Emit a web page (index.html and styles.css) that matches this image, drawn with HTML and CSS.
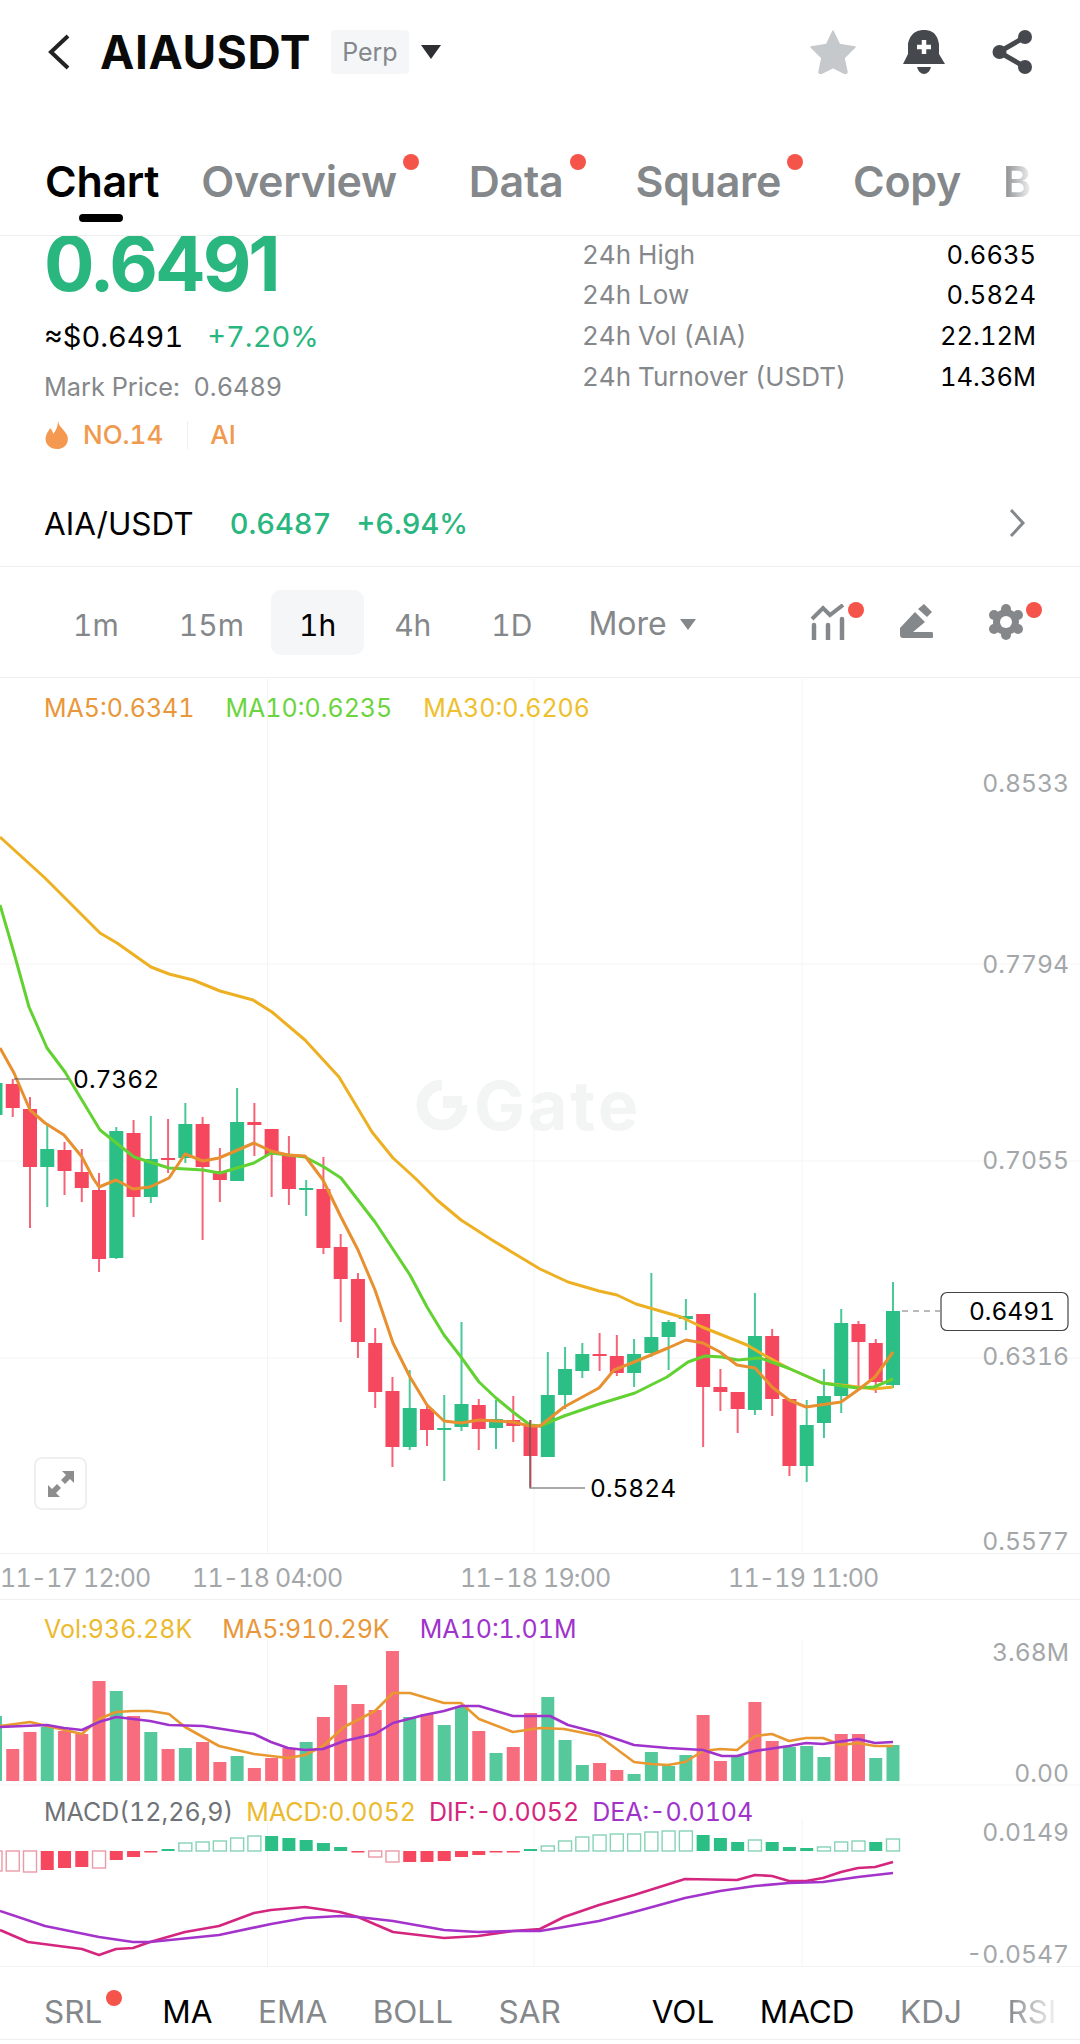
FILE: index.html
```html
<!DOCTYPE html>
<html>
    <head>
        <meta charset="UTF-8">
        <meta name="viewport" content="width=device-width, initial-scale=1.0">
        <title>AIAUSDT</title>
        <link rel="stylesheet" href="styles.css">
    </head>
    <body>
        <header class="top-bar">
            <svg class="back" width="24" height="36" viewBox="0 0 24 36"><path d="M21 2 L4 18 L21 34" fill="none" stroke="#222" stroke-width="4"/></svg>
            <span class="symbol">AIAUSDT</span>
            <span class="perp">Perp</span>
            <span class="caret-down"></span>
            <span class="top-icons">
                <svg width="46" height="44" viewBox="0 0 46 44"><path d="M23 1 L29.5 14.5 L45 17 L34 28 L37 42 Q37 44 34 43 L23 37.5 L12 43 Q9 44 9 42 L12 28 L1 17 L16.5 14.5 Z" fill="#c5c9cb" stroke="#c5c9cb" stroke-linejoin="round" stroke-width="1.5"/></svg>
                <svg width="42" height="44" viewBox="0 0 42 44"><path d="M21 0 C9 0 6 9 5 14 L5 24 L0 34 L42 34 L36 24 L36 14 C35 9 33 0 21 0 Z" fill="#45484c"/><path d="M14 37 H28 Q26 44 21 44 Q16 44 14 37 Z" fill="#45484c"/><path d="M21 10 V24 M14 17 H28" stroke="#fff" stroke-width="4.5"/></svg>
                <svg width="42" height="44" viewBox="0 0 42 44"><path d="M33 7 L7 22 L33 37" fill="none" stroke="#45484c" stroke-width="5"/><circle cx="33" cy="7" r="7" fill="#45484c"/><circle cx="7.5" cy="22" r="7" fill="#45484c"/><circle cx="33" cy="37" r="7" fill="#45484c"/></svg>
            </span>
        </header>

        <nav class="tabs">
            <span class="tab active">Chart</span>
            <span class="tab dotted">Overview</span>
            <span class="tab dotted">Data</span>
            <span class="tab dotted">Square</span>
            <span class="tab">Copy</span>
            <span class="tab fade">B</span>
        </nav>

        <section class="ticker">
            <div class="ticker-left">
                <div class="price">0.6491</div>
                <div class="price-sub"><span class="approx">≈$0.6491</span><span class="up">+7.20%</span></div>
                <div class="mark">Mark Price:&nbsp; 0.6489</div>
                <div class="rank">
                    <svg width="24" height="28" viewBox="0 0 24 28"><path d="M13 0 C14 6 19 8 22 14 C25 21 20 28 12 28 C4 28 -1 22 1 15 C2 11 4 10 5 7 C7 9 8 11 8 13 C11 10 13 5 13 0 Z" fill="#f4994f"/></svg>
                    <span>NO.14</span><i class="rank-sep"></i><span>AI</span>
                </div>
            </div>
            <dl class="stats">
                <div class="stat"><dt>24h High</dt><dd>0.6635</dd></div>
                <div class="stat"><dt>24h Low</dt><dd>0.5824</dd></div>
                <div class="stat"><dt>24h Vol (AIA)</dt><dd>22.12M</dd></div>
                <div class="stat"><dt>24h Turnover (USDT)</dt><dd>14.36M</dd></div>
            </dl>
        </section>

        <div class="pair-row">
            <span class="pair">AIA/USDT</span>
            <span class="pair-price">0.6487</span>
            <span class="pair-price">+6.94%</span>
            <svg class="pair-more" width="18" height="30" viewBox="0 0 18 30"><path d="M3 2 L15 15 L3 28" fill="none" stroke="#85888b" stroke-width="3"/></svg>
        </div>

        <div class="intervals">
            <span class="interval">1m</span>
            <span class="interval before-selected">15m</span>
            <span class="interval selected">1h</span>
            <span class="interval">4h</span>
            <span class="interval">1D</span>
            <span class="interval more">More<i class="caret-small"></i></span>
            <span class="tools">
                <span class="tool badge">
                    <svg width="36" height="36" viewBox="0 0 36 36"><path d="M2 15 L13 4 L20 11 L33 1" fill="none" stroke="#85888b" stroke-width="4"/><path d="M4 21 V35 M18 21 V35 M32 15 V35" stroke="#85888b" stroke-width="4.5" stroke-linecap="round"/></svg>
                </span>
                <span class="tool">
                    <svg width="36" height="36" viewBox="0 0 36 36"><path d="M1 24 L16 8 L26 18 L14 28 H33 Q34 28 34 30 V33 Q34 34 33 34 H4 Q1 34 1 31 Z" fill="#85888b"/><path d="M19 5 L25 0 L33 8 L28 13 Z" fill="#85888b"/></svg>
                </span>
                <span class="tool badge">
                    <svg width="36" height="36" viewBox="0 0 36 36"><g fill="#85888b"><circle cx="18" cy="18" r="13"/><circle cx="18" cy="5" r="5"/><circle cx="18" cy="31" r="5"/><circle cx="6" cy="11" r="5"/><circle cx="30" cy="11" r="5"/><circle cx="6" cy="25" r="5"/><circle cx="30" cy="25" r="5"/></g><circle cx="18" cy="18" r="6" fill="#fff"/></svg>
                </span>
            </span>
        </div>

        <section class="panel panel-main">
            <svg id="mainChart" class="plot" width="1080" height="875" viewBox="0 678 1080 875"></svg>
            <div class="legend legend-main">
                <span class="c-ma5">MA5:0.6341</span>
                <span class="c-ma10">MA10:0.6235</span>
                <span class="c-ma30">MA30:0.6206</span>
            </div>
            <button class="expand">
                <svg width="30" height="30" viewBox="0 0 30 30"><path d="M28 2 V14 L24 10 L19 15 L15 11 L20 6 L16 2 Z M2 28 V16 L6 20 L11 15 L15 19 L10 24 L14 28 Z" fill="#8d8d8d"/></svg>
            </button>
        </section>

        <div class="time-axis">
            <span>11-17 12:00</span>
            <span>11-18 04:00</span>
            <span>11-18 19:00</span>
            <span>11-19 11:00</span>
        </div>

        <section class="panel panel-vol">
            <svg id="volChart" class="plot" width="1080" height="186" viewBox="0 1601 1080 186"></svg>
            <div class="legend legend-vol">
                <span class="c-vol">Vol:936.28K</span>
                <span class="c-ma5">MA5:910.29K</span>
                <span class="c-purple">MA10:1.01M</span>
            </div>
        </section>

        <section class="panel panel-macd">
            <svg id="macdChart" class="plot" width="1080" height="181" viewBox="0 1787 1080 181"></svg>
            <div class="legend legend-macd">
                <span class="c-gray">MACD(12,26,9)</span>
                <span class="c-vol">MACD:0.0052</span>
                <span class="c-dif">DIF:-0.0052</span>
                <span class="c-purple">DEA:-0.0104</span>
            </div>
        </section>

        <nav class="indicators">
            <span class="ind dotted-ind">SRL</span>
            <span class="ind on">MA</span>
            <span class="ind">EMA</span>
            <span class="ind">BOLL</span>
            <span class="ind">SAR</span>
            <i class="ind-sep"></i>
            <span class="ind on">VOL</span>
            <span class="ind on">MACD</span>
            <span class="ind">KDJ</span>
            <span class="ind fade">RSI</span>
        </nav>

        <script src="chart.js"></script>
    </body>
</html>
```

FILE: styles.css
```css
* {
    box-sizing: border-box;
}
body {
    margin: 0;
    width: 1080px;
    background: #fff;
    font-family: Inter, "Liberation Sans", sans-serif;
    font-variant-numeric: tabular-nums;
    color: #000;
    overflow-x: hidden;
}

.top-bar {
    height: 104px;
    display: flex;
    align-items: center;
    padding: 0 46px 0 47px;
}
.back {
    margin-right: 29px;
}
.symbol {
    font-size: 46px;
    font-weight: 700;
    letter-spacing: 0.6px;
    color: #0a0a0a;
}
.perp {
    margin-left: 20px;
    padding: 0 11px;
    line-height: 44px;
    font-size: 25px;
    color: #84888c;
    background: #f4f6f7;
    border-radius: 4px;
}
.caret-down {
    margin-left: 12px;
    border-left: 10px solid transparent;
    border-right: 10px solid transparent;
    border-top: 14px solid #2d2f33;
}
.top-icons {
    margin-left: auto;
    display: flex;
    gap: 47px;
    align-items: center;
}

.tabs {
    height: 132px;
    display: flex;
    align-items: center;
    gap: 42px;
    padding: 22px 0 0 45px;
    border-bottom: 1px solid #eeeeee;
    overflow: hidden;
    position: relative;
}
.tab {
    font-size: 43px;
    font-weight: 600;
    color: #85888b;
    position: relative;
    letter-spacing: -0.3px;
}
.tab.active {
    color: #000;
}
.tab.active::after {
    content: "";
    position: absolute;
    left: 34px;
    top: 59px;
    width: 44px;
    height: 8px;
    border-radius: 4px;
    background: #000;
}
.tab.dotted {
    margin-right: 30px;
}
.tab.dotted::after {
    content: "";
    position: absolute;
    right: -22px;
    top: -1px;
    width: 16px;
    height: 16px;
    border-radius: 50%;
    background: #f5544a;
}
.fade {
    background: linear-gradient(90deg, #85888b 0%, #f2f2f2 100%);
    -webkit-background-clip: text;
    background-clip: text;
    color: transparent;
}
.tab.fade {
    color: transparent;
}

.ticker {
    height: 234px;
    display: flex;
    padding-left: 44px;
}
.ticker-left {
    width: 538px;
}
.price {
    margin-top: -14px;
    font-size: 75px;
    font-weight: 700;
    line-height: 84px;
    letter-spacing: -3px;
    font-variant-numeric: normal;
    color: #2ab67f;
}
.price-sub {
    margin-top: 13px;
    display: flex;
    gap: 24px;
    font-size: 29px;
    line-height: 36px;
}
.up {
    color: #2ab67f;
}
.mark {
    margin-top: 16px;
    font-size: 25.3px;
    line-height: 32px;
    color: #85888b;
}
.rank {
    margin-top: 16px;
    display: flex;
    align-items: center;
    font-size: 26px;
    font-weight: 500;
    color: #f09a4f;
}
.rank svg {
    margin-right: 14px;
    margin-left: 1px;
}
.rank-sep {
    width: 1px;
    height: 28px;
    margin: 0 22px 0 24px;
    background: #f0f0f0;
}
.stats {
    flex: 1;
    margin: -2px 44px 0 0;
}
.stat {
    display: flex;
    justify-content: space-between;
    height: 40.6px;
    align-items: center;
    font-size: 26px;
}
.stat dt {
    color: #85888b;
}
.stat dd {
    margin: 0;
    font-size: 25.5px;
}

.pair-row {
    height: 97px;
    display: flex;
    align-items: center;
    padding: 10px 54px 0 44px;
    border-bottom: 1px solid #eeeeee;
    font-size: 29px;
}
.pair-price {
    margin-left: 25px;
    color: #2ab67f;
    font-weight: 500;
}
.pair {
    font-size: 31.5px;
    margin-right: 11px;
}
.pair-more {
    margin-left: auto;
}

.intervals {
    height: 111px;
    display: flex;
    align-items: center;
    padding: 0 0 0 43px;
    border-bottom: 1px solid #eeeeee;
}
.interval {
    padding: 3px 30px 0;
    height: 65px;
    line-height: 65px;
    font-size: 30px;
    color: #85888b;
    border-radius: 10px;
}
.interval.before-selected {
    margin-right: -3px;
}
.interval.selected {
    padding: 3px 28px 0;
    background: #f5f6f7;
    color: #000;
}
.interval.more {
    margin-left: -4px;
    font-size: 32px;
    display: flex;
    align-items: center;
}
.caret-small {
    margin-left: 13px;
    margin-top: 2px;
    border-left: 8.5px solid transparent;
    border-right: 8.5px solid transparent;
    border-top: 11px solid #85888b;
}
.tools {
    margin-left: auto;
    margin-right: 56px;
    display: flex;
    gap: 53px;
}
.tool {
    position: relative;
    display: block;
    height: 36px;
}
.tool.badge::after {
    content: "";
    position: absolute;
    right: -18px;
    top: -2px;
    width: 16px;
    height: 16px;
    border-radius: 50%;
    background: #f5544a;
}

.panel {
    position: relative;
}
.plot {
    position: absolute;
    left: 0;
    top: 0;
    display: block;
    overflow: visible;
}
.panel-main {
    height: 875px;
}
.panel-vol {
    height: 186px;
}
.panel-macd {
    height: 181px;
    border-bottom: 1px solid #f4f4f4;
}
.legend {
    position: relative;
    display: flex;
    font-size: 25px;
    line-height: 32px;
    padding-left: 44px;
}
.legend-main {
    gap: 31px;
    padding-top: 14px;
}
.legend-vol {
    gap: 30px;
    padding-top: 13px;
}
.legend-macd {
    gap: 13px;
    padding-top: 10px;
}
.c-ma5 {
    color: #e8973a;
}
.c-ma10 {
    color: #6cd43e;
}
.c-ma30 {
    color: #eec02d;
}
.c-vol {
    color: #ebba2e;
}
.c-purple {
    color: #a033cc;
}
.c-gray {
    color: #6f7276;
}
.c-dif {
    color: #d4267f;
}
.tick {
    font-size: 24.7px;
    fill: #a4a7a9;
    text-anchor: end;
}
.note {
    font-size: 24.5px;
    fill: #000;
}
.note.end {
    text-anchor: end;
}
.mark-text {
    font-size: 68px;
    font-weight: 700;
    letter-spacing: 3px;
    fill: #f3f5f5;
    font-variant-numeric: normal;
}
.expand {
    position: absolute;
    left: 34px;
    top: 779px;
    width: 53px;
    height: 53px;
    padding: 10px;
    border: 2px solid #efefef;
    border-radius: 8px;
    background: #fff;
}
.expand svg {
    display: block;
}

.time-axis {
    height: 47px;
    display: flex;
    align-items: center;
    padding-top: 3px;
    font-size: 25px;
    letter-spacing: -0.8px;
    color: #a4a7a9;
    border-top: 1px solid #f0f0f0;
    border-bottom: 1px solid #f0f0f0;
    white-space: nowrap;
}
.time-axis span {
    width: 148px;
    margin-right: 120px;
}
.time-axis span:first-child {
    margin-right: 44px;
}

.indicators {
    height: 73px;
    display: flex;
    align-items: center;
    padding: 17px 0 0 44px;
    border-bottom: 1px solid #eeeeee;
    font-size: 31.5px;
    color: #85888b;
    overflow: hidden;
}
.ind {
    margin-right: 45.5px;
}
.ind.on {
    color: #000;
}
.dotted-ind {
    position: relative;
    margin-right: 60px;
}
.dotted-ind::after {
    content: "";
    position: absolute;
    right: -20px;
    top: -2px;
    width: 16px;
    height: 16px;
    border-radius: 50%;
    background: #f5544a;
}
.ind-sep {
    width: 1px;
    height: 30px;
    background: #f0f0f0;
    margin-right: 45.5px;
}
```

FILE: chart.js
```js
// all y values are page pixels, the svg viewBoxes start at the panel's page y
var RED = "#f5485f", GREEN = "#2bbf86";
var STEP = 17.26, X0 = 12.74;

function xAt(i) {
    return X0 + STEP * i;
}

// color, wick top, body top, body bottom, wick bottom
var candles = [
    ["g",1083,1083,1115,1115],
    ["r",1079,1084,1108,1117],["r",1097,1109,1167,1228],["g",1123,1149,1167,1207],["r",1142,1150,1171,1195],
    ["r",1149,1172,1188,1202],["r",1173,1190,1259,1272],["g",1127,1131,1258,1259],["r",1120,1133,1197,1217],
    ["g",1116,1159,1197,1203],["r",1119,1158,1160,1173],["g",1103,1124,1158,1163],["r",1117,1124,1167,1240],
    ["r",1148,1171,1180,1202],["g",1088,1122,1181,1181],["r",1103,1122,1125,1156],["r",1129,1129,1155,1197],
    ["r",1136,1155,1189,1205],["g",1180,1188,1190,1216],["r",1157,1189,1248,1254],["r",1234,1247,1279,1322],
    ["r",1273,1279,1342,1358],["r",1328,1343,1392,1408],["r",1377,1391,1447,1467],["g",1370,1408,1447,1450],
    ["r",1405,1409,1430,1446],["g",1395,1428,1430,1481],["g",1322,1404,1427,1431],["r",1399,1405,1429,1450],
    ["g",1400,1419,1428,1449],["r",1396,1420,1426,1442],["r",1420,1426,1456,1487],["g",1352,1395,1457,1457],
    ["g",1347,1369,1395,1409],["g",1343,1354,1371,1378],["r",1333,1354,1356,1371],["r",1335,1356,1373,1376],
    ["g",1339,1354,1373,1387],["g",1273,1337,1353,1357],["g",1320,1322,1337,1370],["g",1299,1316,1319,1330],
    ["r",1314,1314,1387,1447],["r",1369,1387,1392,1411],["r",1392,1392,1409,1433],["g",1293,1336,1410,1415],
    ["r",1329,1336,1399,1416],["r",1399,1399,1466,1476],["g",1400,1425,1466,1482],["g",1369,1396,1423,1438],
    ["g",1309,1323,1396,1413],["r",1321,1324,1342,1387],["r",1339,1343,1382,1393],["g",1282,1311,1385,1388]
];

var ma30 = "0,837 45,878 100,933 117,943 151,967 169,974 193,980 220,991 253,1000 272,1012 305,1040 339,1077 372,1132 393,1158 415,1178 437,1200 461,1220 492,1240 540,1269 568,1282 599,1291 617,1295 636,1304 681,1317 702,1327 747,1345 764,1355 788,1368 822,1383 850,1386 874,1389 893,1387";
var ma10 = "0,905 14,953 29,1007 47,1048 65,1072 100,1130 134,1157 169,1168 203,1170 220,1173 254,1163 271,1153 305,1157 324,1167 341,1178 375,1222 410,1275 427,1307 444,1335 461,1357 479,1382 496,1398 513,1412 530,1425 540,1426 564,1416 599,1404 635,1393 667,1377 688,1362 705,1356 722,1357 738,1360 760,1358 788,1368 822,1383 857,1388 874,1387 893,1379";
var ma5 = "0,1048 14,1073 30,1110 45,1123 64,1135 82,1157 93,1178 99,1187 116,1180 133,1189 150,1187 169,1178 185,1154 203,1161 219,1158 254,1143 271,1151 288,1155 305,1156 323,1180 341,1217 358,1250 375,1290 393,1343 410,1377 427,1405 444,1421 461,1423 479,1420 513,1422 530,1426 540,1426 564,1407 599,1388 614,1370 634,1362 668,1348 686,1340 703,1343 720,1352 737,1365 755,1368 772,1387 789,1400 806,1407 841,1402 858,1390 875,1377 893,1352";

// bar tops, first entry is the cut off bar at the left edge
var volTop = [1717,1750,1733,1728,1732,1735,1682,1692,1717,1733,1750,1749,1743,1763,1757,1769,1759,1749,1743,1718,1686,1705,1711,1652,1718,1715,1726,1708,1732,1754,1748,1714,1698,1741,1766,1764,1771,1775,1753,1767,1756,1716,1762,1757,1703,1742,1748,1747,1758,1735,1735,1759,1746];
var volColors = "grrgrrrgrgrgrrgrrrgrrrrrgrggrgrrgggrrggggrrgrrgggrrg";
var volMa5 = "0,1727 30,1723 47,1727 82,1735 99,1720 116,1713 133,1712 150,1712 169,1715 185,1728 219,1747 254,1755 288,1759 305,1756 323,1747 344,1728 375,1712 393,1694 410,1694 444,1704 461,1704 479,1720 513,1733 540,1729 564,1730 599,1737 634,1763 651,1765 668,1766 685,1763 703,1752 720,1750 737,1751 755,1737 772,1735 789,1742 806,1739 823,1739 841,1746 858,1744 875,1747 893,1747";
var volMa10 = "0,1728 47,1726 64,1729 82,1731 99,1723 116,1718 150,1722 169,1726 203,1727 254,1735 271,1743 288,1749 305,1751 323,1750 344,1742 375,1735 393,1724 424,1716 444,1712 461,1707 479,1707 513,1717 550,1717 568,1726 599,1734 634,1746 668,1749 703,1751 722,1757 737,1757 755,1752 789,1747 806,1744 823,1745 858,1740 875,1744 893,1743";

// kind: R/G filled, r/g hollow; end is the y the bar reaches from the zero line
var macdZero = 1852;
var macdBars = [
    ["r",1872],["r",1872],["r",1873],["R",1871],["R",1869],["R",1868],["r",1869],["R",1861],["R",1858],["R",1853],
    ["G",1850],["g",1844],["g",1843],["g",1842],["g",1839],["g",1837],["G",1837],["G",1839],["G",1841],["G",1844],
    ["G",1848],["R",1853],["r",1858],["r",1863],["R",1863],["R",1863],["R",1862],["R",1858],["R",1856],["R",1853],
    ["R",1852],["G",1850],["g",1847],["g",1842],["g",1838],["g",1836],["g",1835],["g",1835],["g",1833],["g",1832],
    ["g",1832],["G",1836],["G",1839],["G",1843],["g",1841],["G",1843],["G",1848],["G",1849],["g",1848],["g",1843],
    ["g",1842],["G",1843],["g",1840]
];
var dif = "0,1931 28,1943 82,1950 99,1956 116,1950 133,1949 150,1943 185,1933 219,1927 254,1914 271,1911 305,1908 340,1913 358,1918 393,1933 444,1939 478,1937 513,1932 540,1930 564,1918 599,1906 634,1896 685,1880 737,1881 755,1876 772,1877 789,1882 806,1882 823,1879 841,1873 858,1869 875,1868 893,1863";
var dea = "0,1912 45,1927 99,1938 133,1943 150,1943 219,1936 271,1925 305,1919 340,1917 358,1918 393,1922 444,1931 478,1933 513,1932 540,1932 564,1928 599,1922 634,1913 685,1899 720,1892 755,1887 789,1884 823,1883 858,1878 893,1874";

function line(x1, y1, x2, y2, color, w, extra) {
    return '<line x1="' + x1 + '" y1="' + y1 + '" x2="' + x2 + '" y2="' + y2 + '" stroke="' + color + '" stroke-width="' + w + '" ' + (extra || "") + '/>';
}
function rect(x, y, w, h, attrs) {
    return '<rect x="' + x + '" y="' + y + '" width="' + w + '" height="' + h + '" ' + attrs + '/>';
}
function curve(points, color, w) {
    return '<polyline points="' + points + '" fill="none" stroke="' + color + '" stroke-width="' + w + '" stroke-linejoin="round"/>';
}
function label(x, y, text, cls) {
    return '<text x="' + x + '" y="' + y + '" class="' + cls + '">' + text + '</text>';
}
function grid(top, bottom, rows) {
    var out = "";
    [267.5, 534, 802].forEach(function (x) {
        out += line(x, top, x, bottom, "#f3f4f5", 1);
    });
    rows.forEach(function (y) {
        out += line(0, y, 1080, y, "#f3f4f5", 1);
    });
    return out;
}

function drawMain() {
    var s = grid(679, 1553, [964, 1161, 1358]);

    // watermark
    s += '<path d="M462 1105 A20 20 0 1 1 442 1085" fill="none" stroke="#f3f5f5" stroke-width="11"/><path d="M443 1096 H462 V1108 H443 Z" fill="#f3f5f5"/>';
    s += label(474, 1130, "Gate", "mark-text");

    candles.forEach(function (c, n) {
        var x = xAt(n - 1), color = c[0] == "r" ? RED : GREEN;
        s += line(x, c[1], x, c[4], color, 2, 'opacity="0.85"');
        s += rect(x - 7, c[2], 14, Math.max(c[3] - c[2], 2), 'fill="' + color + '"');
    });

    s += curve(ma30, "#eeb023", 3);
    s += curve(ma10, "#62d233", 3);
    s += curve(ma5, "#e8902f", 3);

    // high / low marks
    s += line(14, 1079, 68, 1079, "#555", 1.2);
    s += label(73, 1088, "0.7362", "note");
    s += '<polyline points="530,1420 530,1488 585,1488" fill="none" stroke="#555" stroke-width="1.2"/>';
    s += label(590, 1497, "0.5824", "note");

    // last price box
    s += line(902, 1311, 940, 1311, "#777", 1.2, 'stroke-dasharray="6 5"');
    s += rect(941, 1292.5, 127, 38, 'rx="6" fill="#fff" stroke="#444" stroke-width="1.2"');
    s += label(1055, 1320, "0.6491", "note end");

    [["0.8533", 792], ["0.7794", 973], ["0.7055", 1169], ["0.6316", 1365], ["0.5577", 1550]].forEach(function (t) {
        s += label(1069, t[1], t[0], "tick");
    });
    document.getElementById("mainChart").innerHTML = s;
}

function drawVol() {
    var s = grid(1640, 1786, [1786]);
    volTop.forEach(function (top, n) {
        var x = xAt(n - 1);
        s += rect(x - 6.5, top, 13, 1782 - top, 'fill="' + (volColors[n] == "r" ? "#f76d7e" : "#55c99c") + '"');
    });
    s += curve(volMa5, "#e8982f", 2.6);
    s += curve(volMa10, "#a033cc", 2.6);
    s += label(1069, 1662, "3.68M", "tick");
    s += label(1069, 1783, "0.00", "tick");
    document.getElementById("volChart").innerHTML = s;
}

function drawMacd() {
    var s = grid(1820, 1967, []);
    macdBars.forEach(function (b, n) {
        var x = xAt(n - 1), top = Math.min(b[1], macdZero), h = Math.abs(b[1] - macdZero);
        if (b[0] == "r" || b[0] == "g") {
            s += rect(x - 6.5, top, 13, h, 'fill="#fff" stroke="' + (b[0] == "r" ? "#eb9aa8" : "#86d3b6") + '" stroke-width="1.4"');
        } else {
            s += rect(x - 6.5, top, 13, Math.max(h, 1.5), 'fill="' + (b[0] == "R" ? RED : GREEN) + '"');
        }
    });
    s += curve(dif, "#d4267f", 2.6);
    s += curve(dea, "#a433cc", 2.6);
    s += label(1069, 1842, "0.0149", "tick");
    s += label(1069, 1964, "-0.0547", "tick");
    document.getElementById("macdChart").innerHTML = s;
}

drawMain();
drawVol();
drawMacd();
```
